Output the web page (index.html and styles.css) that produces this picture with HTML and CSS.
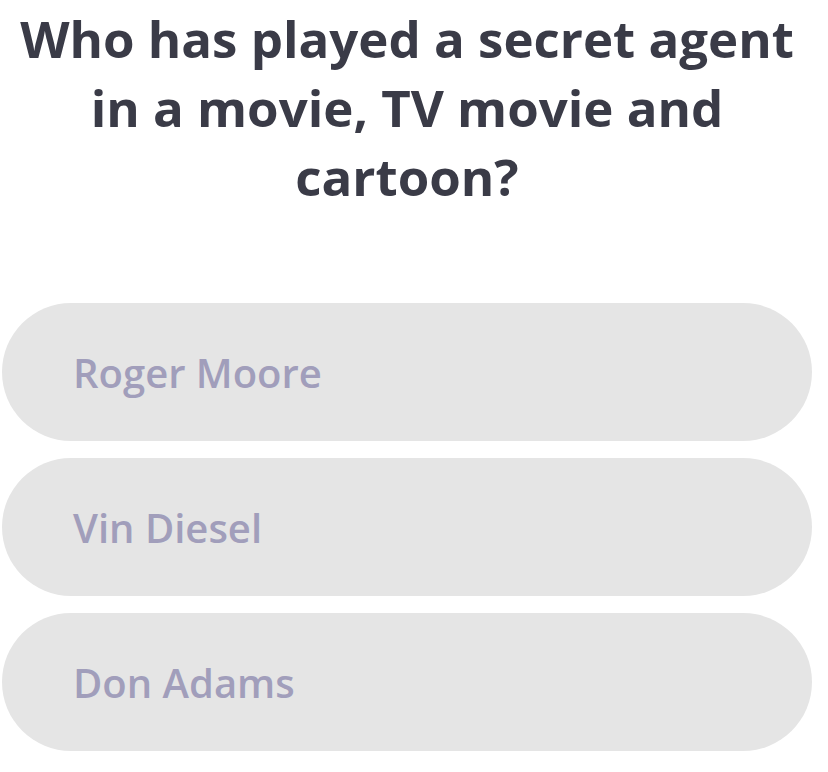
FILE: index.html
```html
<!DOCTYPE html>
<html lang="en">
<head>
<meta charset="utf-8">
<title>Quiz</title>
<link rel="stylesheet" href="styles.css">
</head>
<body>
<main class="quiz">
  <h1 class="question">Who has played a secret agent in a movie, TV movie and cartoon?</h1>
  <div class="answers">
    <button class="answer">Roger Moore</button>
    <button class="answer">Vin Diesel</button>
    <button class="answer">Don Adams</button>
  </div>
</main>
</body>
</html>
```
FILE: styles.css
```css
html, body {
  margin: 0;
  padding: 0;
  background: #ffffff;
}
body {
  font-family: "Open Sans", sans-serif;
}
.quiz {
  width: 810px;
  margin-left: 2px;
  padding-top: 4px;
}
.question {
  margin: 0 auto;
  width: 800px;
  text-align: center;
  font-size: 51px;
  line-height: 69px;
  font-weight: 700;
  color: #3a3b47;
}
.answers {
  margin-top: 92px;
  display: flex;
  flex-direction: column;
  gap: 17px;
}
.answer {
  display: flex;
  align-items: center;
  height: 138px;
  border: none;
  border-radius: 69px;
  background: #e5e5e5;
  padding: 0 0 0 71px;
  font-family: "Open Sans", sans-serif;
  font-size: 40px;
  font-weight: 600;
  color: #a19ebb;
  text-align: left;
}
```
